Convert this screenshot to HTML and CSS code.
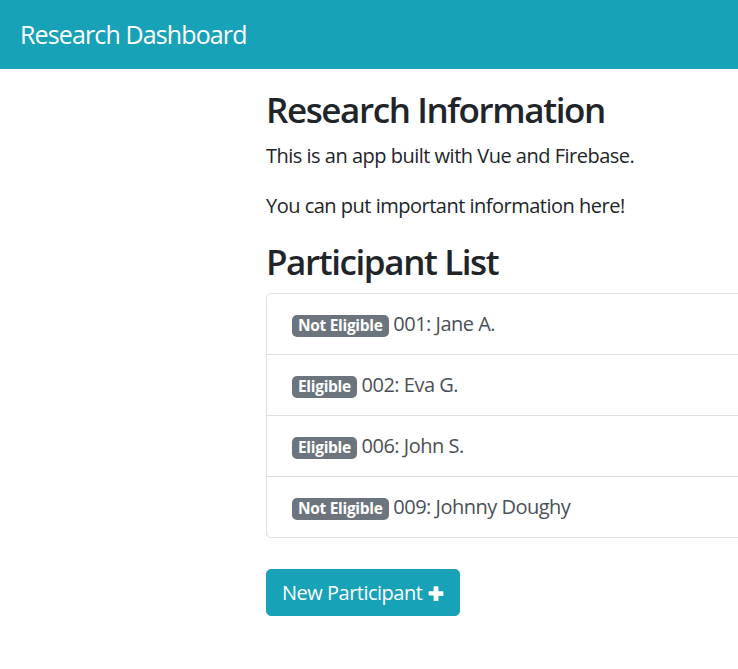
FILE: index.html
```html
<!DOCTYPE html>
<html lang="en">
<head>
<meta charset="utf-8">
<title>Research Dashboard</title>
<link rel="stylesheet" href="styles.css">
</head>
<body>
<nav class="navbar">
  <a class="brand" href="#">Research Dashboard</a>
</nav>
<main class="main">
  <h3 class="title">Research Information</h3>
  <p class="text">This is an app built with Vue and Firebase.</p>
  <p class="text">You can put important information here!</p>
  <h3 class="title">Participant List</h3>
  <ul class="list">
    <li class="item"><span class="badge">Not Eligible</span> 001: Jane A.</li>
    <li class="item"><span class="badge">Eligible</span> 002: Eva G.</li>
    <li class="item"><span class="badge">Eligible</span> 006: John S.</li>
    <li class="item"><span class="badge">Not Eligible</span> 009: Johnny Doughy</li>
  </ul>
  <button class="btn" type="button">New Participant <svg class="plus" viewBox="0 0 16 16" width="16" height="16" aria-hidden="true"><path d="M6.2 1.2h3.6a.6.6 0 0 1 .6.6v4.4h4.4a.6.6 0 0 1 .6.6v3.6a.6.6 0 0 1-.6.6h-4.4v4.4a.6.6 0 0 1-.6.6H6.2a.6.6 0 0 1-.6-.6V10.4H1.2a.6.6 0 0 1-.6-.6V6.8a.6.6 0 0 1 .6-.6h4.4V1.8a.6.6 0 0 1 .6-.6z" fill="#fff"/></svg></button>
</main>
</body>
</html>
```

FILE: styles.css
```css
html, body {
  margin: 0;
  padding: 0;
  overflow: hidden;
}
body {
  font-family: "Open Sans", "Noto Sans", sans-serif;
  font-size: 20px;
  line-height: 1.5;
  color: #212529;
  background: #fff;
  letter-spacing: -0.025em;
}
.navbar {
  height: 69px;
  box-sizing: border-box;
  background: #17a2b8;
  display: flex;
  align-items: center;
  padding: 0 20px;
}
.brand {
  color: #fff;
  text-decoration: none;
  font-size: 25px;
  line-height: 1.5;
  letter-spacing: -0.035em;
}
.main {
  margin-left: 266px;
  padding-top: 20px;
  width: 560px;
}
.title {
  font-size: 35px;
  font-weight: 600;
  line-height: 1.2;
  margin: 0 0 10px;
  letter-spacing: -0.04em;
}
.text {
  margin: 0 0 20px;
}
.list {
  list-style: none;
  margin: 0 0 31px;
  padding: 0;
  border: 1px solid #dfdfdf;
  border-radius: 5px;
}
.item {
  padding: 15px 25px;
  color: #495057;
  border-top: 1px solid #dfdfdf;
}
.item:first-child {
  border-top: 0;
}
.badge {
  display: inline-block;
  background: #6c757d;
  color: #fff;
  font-size: 15.5px;
  font-weight: 700;
  line-height: 1;
  padding: 3.5px 6px;
  border-radius: 5px;
  vertical-align: baseline;
  letter-spacing: -0.02em;
}
.btn {
  font-family: inherit;
  font-size: 20px;
  line-height: 1.5;
  letter-spacing: -0.025em;
  color: #fff;
  background: #17a2b8;
  border: 1px solid #17a2b8;
  border-radius: 5px;
  padding: 7.5px 15px;
  display: inline-flex;
  align-items: center;
  gap: 6px;
}
.plus {
  display: block;
}
```
